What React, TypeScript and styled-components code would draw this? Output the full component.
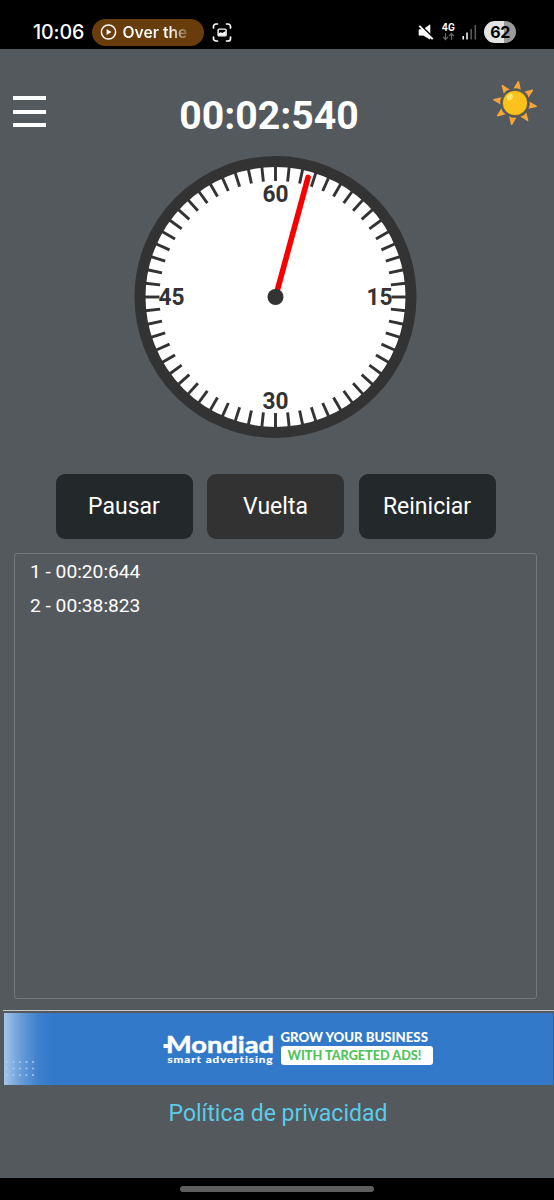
import React from "react";
import styled, { createGlobalStyle } from "styled-components";

const GlobalStyle = createGlobalStyle`
  * { box-sizing: border-box; }
  body { margin: 0; background: #54595d; font-family: Roboto, sans-serif; }
  button { font: inherit; border: 0; padding: 0; cursor: pointer; }
  svg { overflow: visible; flex: none; }
`;

const Screen = styled.div`
  width: 554px;
  height: 1200px;
  display: flex;
  flex-direction: column;
  background: #54595d;
  color: #fff;
  overflow: hidden;
`;

const StatusBar = styled.div`
  height: 49px;
  flex: none;
  padding: 15px 38px 0 33px;
  display: flex;
  justify-content: space-between;
  background: #000;
  font-family: Inter, sans-serif;
`;

const StatusGroup = styled.div<{ $gap: number }>`
  display: flex;
  align-items: center;
  height: 34px;
  gap: ${(p) => p.$gap}px;
`;

const Time = styled.span`
  width: 51px;
  font-size: 19.6px;
  font-weight: 500;
  letter-spacing: -0.1px;
  white-space: nowrap;
`;

const MediaPill = styled.div`
  width: 112.5px;
  height: 27px;
  padding-left: 9px;
  display: flex;
  align-items: center;
  gap: 6px;
  border-radius: 14px;
  background: #683c0b;
`;

const MediaTitle = styled.span`
  font-size: 15.7px;
  font-weight: 600;
  white-space: nowrap;
  background: linear-gradient(90deg, #fff 72%, #8d6c48 100%);
  background-clip: text;
  color: transparent;
`;

const Battery = styled.div`
  width: 32px;
  height: 22px;
  border-radius: 11px;
  background: linear-gradient(90deg, #e4e4e4 62%, #999 62%);
  color: #000;
  font-size: 16px;
  font-weight: 700;
  line-height: 22px;
  text-align: center;
  letter-spacing: -0.5px;
`;

const Header = styled.header`
  height: 106px;
  flex: none;
  padding: 29px 15px 0 13px;
  display: grid;
  grid-template-columns: 48px 1fr 48px;
`;

const MenuButton = styled.button`
  width: 33px;
  height: 31px;
  margin-top: 18px;
  display: flex;
  flex-direction: column;
  justify-content: space-between;
  background: none;
`;

const MenuLine = styled.span`
  width: 33px;
  height: 4px;
  background: #fff;
`;

const Elapsed = styled.h1`
  margin: 15px 0 0;
  padding-right: 14px;
  font-size: 39.2px;
  line-height: 47px;
  font-weight: 700;
  text-align: center;
  white-space: nowrap;
`;

const ThemeButton = styled.button`
  width: 48px;
  height: 54px;
  background: none;
`;

const Dial = styled.svg`
  width: 284px;
  height: 284px;
  flex: none;
  margin-left: 133px;
  display: block;
`;

const Actions = styled.div`
  margin: 35px 0 0 55.5px;
  display: flex;
  gap: 14.5px;
`;

const ActionButton = styled.button<{ $tone?: "muted" }>`
  && { font-size: 23px; }
  width: 137px;
  height: 65px;
  border-radius: 9px;
  background: ${(p) => (p.$tone === "muted" ? "#333232" : "#23282b")};
  color: #fff;
`;

const Laps = styled.ol`
  list-style: none;
  margin: 14px 17px 0 14px;
  padding: 1px 15px;
  height: 446px;
  flex: none;
  border: 1px solid #75797c;
  border-radius: 3px;
`;

const Lap = styled.li`
  height: 34px;
  line-height: 34px;
  font-size: 19.2px;
`;

const AdSlot = styled.aside`
  margin: 11px 0 0 3px;
  padding: 1.5px 1.5px 0 1px;
  border-top: 1.5px solid #c6c8c9;
`;

const Banner = styled.div`
  height: 72px;
  display: flex;
  align-items: center;
  background: linear-gradient(90deg, #a5c5e8 0, #6b9ed8 16px, #3e80cc 34px, #3279ca 50px);
`;

const Dots = styled.svg`
  width: 34px;
  height: 20px;
  margin-top: 40px;
`;

const Logo = styled.svg`
  width: 113px;
  height: 36px;
  margin-left: 125px;
`;

const Slogan = styled.div`
  margin: -5px 0 0 4.5px;
  width: 152px;
  font-family: Lato, sans-serif;
  font-weight: 900;
`;

const SloganTop = styled.div`
  height: 18px;
  font-size: 13.2px;
  line-height: 18px;
  white-space: nowrap;
`;

const SloganTag = styled.div`
  height: 19px;
  padding-right: 4px;
  border-radius: 3px;
  background: #fff;
  color: #51c35c;
  font-size: 12.7px;
  line-height: 18px;
  text-align: center;
  white-space: nowrap;
`;

const Privacy = styled.a`
  margin-top: 15px;
  padding-left: 2px;
  font-size: 23px;
  line-height: 28px;
  text-align: center;
  color: #5bcbe9;
`;

const NavBar = styled.div`
  height: 22px;
  margin-top: auto;
  flex: none;
  padding-top: 8px;
  background: #000;
`;

const NavHandle = styled.div`
  width: 194px;
  height: 6px;
  margin: 0 auto;
  border-radius: 3px;
  background: #5e5e5e;
`;

const PlayIcon = () => (
  <svg width="16" height="16" viewBox="0.5 0 16 16">
    <circle cx="8" cy="8" r="7.1" fill="none" stroke="#fff" strokeWidth="1.5" />
    <path d="M6.1 4.9v6.2L11 8z" fill="#fff" />
  </svg>
);

const CaptureIcon = () => (
  <svg width="19" height="19" viewBox="-0.5 0 19 19" fill="none" stroke="#fff" strokeWidth="1.7" strokeLinecap="round">
    <path d="M1 5V3.5A2.5 2.5 0 0 1 3.5 1H5M14 1h1.5A2.5 2.5 0 0 1 18 3.5V5M18 14v1.5A2.5 2.5 0 0 1 15.5 18H14M5 18H3.5A2.5 2.5 0 0 1 1 15.5V14" />
    <rect x="5.6" y="6.1" width="8" height="6.8" rx="1" strokeWidth="1.4" />
    <path d="M6 12.5V10.300l2.300-1 1.500.6 3.400-2v4.600z" fill="#fff" stroke="none" />
  </svg>
);

const MuteIcon = () => (
  <svg width="16" height="17" viewBox="0 0 16 17">
    <path d="M1 5.6h4.200L12 .8v14.400l-6.800-4H1z" fill="#fff" stroke="#fff" strokeWidth="0.6" />
    <path d="M2.200 .8 16 14.400" stroke="#000" strokeWidth="1.8" />
    <path d="M1.300 1.800 14.700 15.200" stroke="#fff" strokeWidth="1.9" />
  </svg>
);

const NetworkIcon = () => (
  <svg width="14" height="18" viewBox="-0.5 0 14 18">
    <text x="0.3" y="8" fill="#fff" fontSize="10" fontWeight="700" fontFamily="Inter, sans-serif" textLength="13" lengthAdjust="spacingAndGlyphs">4G</text>
    <path d="M4 10.300v6M1.500 13.800 4 16.500l2.500-2.700M10 17v-6M7.500 13.200 10 10.500l2.500 2.700" fill="none" stroke="#686868" strokeWidth="1.2" />
  </svg>
);

const SignalIcon = () => (
  <svg width="15" height="16" viewBox="0 0 15 16">
    <path d="M1.200 12v3.500M5 8.500v7" stroke="#fff" strokeWidth="1.5" />
    <path d="M9.200 5v10.500M13.300 1v14.500" stroke="#5c5c5c" strokeWidth="1.5" />
  </svg>
);

const SunIcon = () => (
  <svg width="46" height="46" viewBox="-23 -23 46 46">
    <g fill="#f9a43a">
      {Array.from({ length: 8 }, (_, i) => (
        <path key={i} d="M-3.700-14Q0-15.800 3.700-14L.7-21.800Q0-22.800-.7-21.800z" transform={`rotate(${9 + i * 45})`} />
      ))}
    </g>
    <circle r="12.6" fill="#fdc11d" stroke="#514a35" strokeWidth="0.7" />
    <ellipse cx="-5.2" cy="-6" rx="2.7" ry="3.7" transform="rotate(35 -5.2 -6)" fill="#ffe36b" />
  </svg>
);

const labels = [
  { text: "60", x: 0, y: -95 },
  { text: "15", x: 104, y: 8 },
  { text: "30", x: 0, y: 112 },
  { text: "45", x: -104, y: 8 },
];

const Stopwatch = () => (
  <Dial viewBox="-142.5 -142 284 284">
    <circle r="135.5" fill="#fff" stroke="#333" strokeWidth="11" />
    {Array.from({ length: 60 }, (_, i) => (
      <path key={i} d="M0-131V-116" stroke="#333" strokeWidth="2.9" transform={`rotate(${i * 6})`} />
    ))}
    {labels.map((l) => (
      <text key={l.text} x={l.x} y={l.y} textAnchor="middle" fill="#333" fontFamily="Roboto, sans-serif" fontSize="23" fontWeight="700" textLength="26" lengthAdjust="spacingAndGlyphs">
        {l.text}
      </text>
    ))}
    <path d="M0 0V-124" stroke="#f60000" strokeWidth="5.6" strokeLinecap="round" transform="rotate(15.24)" />
    <circle r="8" fill="#333" />
  </Dial>
);

const laps = ["00:20:644", "00:38:823"];

export default function App() {
  return (
    <Screen>
      <GlobalStyle />
      <StatusBar>
        <StatusGroup $gap={7.5}>
          <Time>10:06</Time>
          <MediaPill>
            <PlayIcon />
            <MediaTitle>Over the</MediaTitle>
          </MediaPill>
          <CaptureIcon />
        </StatusGroup>
        <StatusGroup $gap={7}>
          <MuteIcon />
          <NetworkIcon />
          <SignalIcon />
          <Battery>62</Battery>
        </StatusGroup>
      </StatusBar>
      <Header>
        <MenuButton aria-label="Menú">
          <MenuLine />
          <MenuLine />
          <MenuLine />
        </MenuButton>
        <Elapsed>00:02:540</Elapsed>
        <ThemeButton aria-label="Tema">
          <SunIcon />
        </ThemeButton>
      </Header>
      <Stopwatch />
      <Actions>
        <ActionButton>Pausar</ActionButton>
        <ActionButton $tone="muted">Vuelta</ActionButton>
        <ActionButton>Reiniciar</ActionButton>
      </Actions>
      <Laps>
        {laps.map((time, i) => (
          <Lap key={time}>{`${i + 1} - ${time}`}</Lap>
        ))}
      </Laps>
      <AdSlot>
        <Banner>
          <Dots viewBox="0 0 34 20" fill="#a9cbf0">
            {[0, 1, 2].map((r) =>
              [0, 1, 2, 3, 4].map((c) => <circle key={`${r}${c}`} cx={3 + c * 6.5} cy={3 + r * 6.5} r="1" />)
            )}
          </Dots>
          <Logo viewBox="0 0 113 36" fill="#fff" fontFamily="Lato, sans-serif">
            <path d="M0.500 13h5v4h-5z" />
            <text x="3" y="21.500" fontSize="23.5" fontWeight="700" stroke="#fff" strokeWidth="0.5" textLength="108" lengthAdjust="spacingAndGlyphs">Mondiad</text>
            <text x="4.500" y="31.500" fontSize="10" letterSpacing="0.8" fontWeight="700" stroke="#fff" strokeWidth="0.2" textLength="106" lengthAdjust="spacingAndGlyphs">smart advertising</text>
          </Logo>
          <Slogan>
            <SloganTop>GROW YOUR BUSINESS</SloganTop>
            <SloganTag>WITH TARGETED ADS!</SloganTag>
          </Slogan>
        </Banner>
      </AdSlot>
      <Privacy>Política de privacidad</Privacy>
      <NavBar>
        <NavHandle />
      </NavBar>
    </Screen>
  );
}
